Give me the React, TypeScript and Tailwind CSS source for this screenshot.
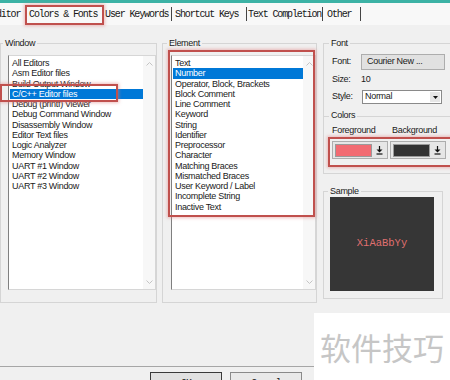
import React from "react";
import { clsx } from "clsx";

const WINDOWS = [
  "All Editors",
  "Asm Editor files",
  "Build Output Window",
  "C/C++ Editor files",
  "Debug (printf) Viewer",
  "Debug Command Window",
  "Disassembly Window",
  "Editor Text files",
  "Logic Analyzer",
  "Memory Window",
  "UART #1 Window",
  "UART #2 Window",
  "UART #3 Window",
];

const ELEMENTS = [
  "Text",
  "Number",
  "Operator, Block, Brackets",
  "Block Comment",
  "Line Comment",
  "Keyword",
  "String",
  "Identifier",
  "Preprocessor",
  "Character",
  "Matching Braces",
  "Mismatched Braces",
  "User Keyword / Label",
  "Incomplete String",
  "Inactive Text",
];

const mono = "font-['Liberation_Mono','Courier_New',monospace] text-[10px] tracking-[-1.12px] text-[#161616]";

function Chevron({ up }: { up?: boolean }) {
  return (
    <svg width="7" height="4" viewBox="0 0 7 4" className="text-[#c4c4c4]">
      <polyline
        points={up ? "0.5,3.5 3.5,0.5 6.5,3.5" : "0.5,0.5 3.5,3.5 6.5,0.5"}
        fill="none"
        stroke="currentColor"
        strokeWidth="1"
      />
    </svg>
  );
}

function ListBox({ items, selected, className }: { items: string[]; selected: number; className: string }) {
  return (
    <div className={clsx("flex h-[235px] border border-[#d6d6d6] border-l-[#7f7f7f] bg-white", className)}>
      <div className="flex-1 pt-[2px] pl-px">
        {items.map((item, i) => (
          <div
            key={item}
            className={clsx(
              "h-[10.25px] whitespace-nowrap pl-[2px] leading-[10.25px]",
              i === selected && "bg-[#0078d7] text-white"
            )}
          >
            {item}
          </div>
        ))}
      </div>
      {/* scrollbar */}
      <div className="flex w-[12px] flex-col items-center justify-between bg-[#f7f7f7] pt-[6px] pb-[5px]">
        <Chevron up />
        <Chevron />
      </div>
    </div>
  );
}

function DropIcon() {
  return (
    <svg width="7" height="9" viewBox="0 0 7 9">
      <line x1="3.5" y1="0" x2="3.5" y2="4" stroke="#111" strokeWidth="1.2" />
      <polygon points="0.5,3.5 6.5,3.5 3.5,6.5" fill="#111" />
      <line x1="0.5" y1="8" x2="6.5" y2="8" stroke="#111" strokeWidth="1.2" />
    </svg>
  );
}

function ColorPick({ color, className }: { color: string; className: string }) {
  return (
    <div className={clsx("flex h-[18px] items-center border border-[#adadad] bg-[#e6e6e6] pl-[2px]", className)}>
      <div className="h-[13px] w-[37px] border border-[#9a9a9a]" style={{ background: color }} />
      <div className="flex flex-1 justify-center">
        <DropIcon />
      </div>
    </div>
  );
}

function RedBox({ className }: { className: string }) {
  return (
    <div
      className={clsx(
        "pointer-events-none absolute border-2 border-[#c0504d] shadow-[0_0_3px_1px_rgba(225,130,130,0.5)]",
        className
      )}
    />
  );
}

export default function App() {
  return (
    <div className="relative h-[380px] w-[450px] overflow-hidden bg-[#f0f0f0] font-['Liberation_Sans',Arial,sans-serif] text-[9px] tracking-[-0.3px] text-[#1a1a1a]">
      <div className="h-[3px] bg-[#3cb2a5]" />

      {/* tab strip */}
      <div className={clsx("flex h-[22px] items-center bg-[#f8f8f8] whitespace-nowrap", mono)}>
        <span className="-ml-[9px] w-[34px]">Editor</span>
        <span className="w-[78px] pl-[4px]">Colors &amp; Fonts</span>
        <span className="w-[68px] pl-[2px]">User Keywords</span>
        <div className="h-[14px] w-px bg-[#444]" />
        <span className="w-[74px] pl-[3px]">Shortcut Keys</span>
        <div className="h-[14px] w-px bg-[#444]" />
        <span className="w-[75px] pl-[1px]">Text Completion</span>
        <div className="h-[14px] w-px bg-[#444]" />
        <span className="w-[37px] pl-[4px]">Other</span>
        <div className="h-[14px] w-px bg-[#444]" />
      </div>

      <div className="mt-[13px] flex items-start">
        {/* Window */}
        <fieldset className="h-[265px] w-[160px] border border-[#d5d5d5] p-0">
          <legend className="ml-[2px] px-[2px] leading-[10px]">Window</legend>
          <ListBox items={WINDOWS} selected={3} className="mt-[7px] ml-[7px] w-[148px]" />
        </fieldset>

        {/* Element */}
        <fieldset className="ml-[5px] h-[265px] w-[157px] border border-[#d5d5d5] p-0">
          <legend className="ml-[4px] px-[2px] leading-[10px]">Element</legend>
          <ListBox items={ELEMENTS} selected={1} className="mt-[7px] ml-[8px] w-[145px]" />
        </fieldset>

        {/* Font / Colors / Sample */}
        <div className="ml-[6px] flex flex-col">
          <fieldset className="h-[136px] w-[130px] border border-[#d5d5d5] p-0">
            <legend className="ml-[5px] px-[2px] leading-[10px]">Font</legend>
            <div className="pt-[6px] pl-[8px]">
              <div className="flex h-[16px] items-center">
                <span className="w-[29px]">Font:</span>
                <div className="flex h-[16px] w-[84px] items-center border border-[#adadad] bg-[#e1e1e1] pl-[5px]">
                  Courier New ...
                </div>
              </div>
              <div className="mt-[4px] flex h-[12px] items-center">
                <span className="w-[29px]">Size:</span>
                <span>10</span>
              </div>
              <div className="mt-[4px] flex h-[14px] items-center">
                <span className="w-[30px]">Style:</span>
                <div className="flex h-[14px] w-[80px] items-center border border-[#8a8a8a] bg-white pl-[2px]">
                  <span className="flex-1">Normal</span>
                  <div className="mr-px flex h-[10px] w-[10px] items-center justify-center bg-[#e6e6e6]">
                    <svg width="5" height="3" viewBox="0 0 5 3">
                      <polygon points="0,0 5,0 2.5,3" fill="#111" />
                    </svg>
                  </div>
                </div>
              </div>
              <div className="mt-[7px] -ml-[8px] flex h-[10px] items-center">
                <div className="h-px w-[5px] bg-[#d5d5d5]" />
                <span className="px-[2px]">Colors</span>
                <div className="h-px flex-1 bg-[#d5d5d5]" />
              </div>
              <div className="mt-[5px] flex h-[10px] items-center">
                <span className="w-[60px]">Foreground</span>
                <span>Background</span>
              </div>
              <div className="mt-[5px] flex">
                <ColorPick color="#f26b72" className="w-[56px]" />
                <ColorPick color="#333333" className="ml-[2px] w-[56px]" />
              </div>
            </div>
          </fieldset>

          <fieldset className="mt-[12px] h-[113px] w-[120px] border border-[#d5d5d5] p-0">
            <legend className="ml-[4px] px-[2px] leading-[10px]">Sample</legend>
            <div className="pt-px pl-[6px]">
              <div className="flex h-[94px] w-[104px] items-center justify-center bg-[#363636] font-['Liberation_Mono','Courier_New',monospace] text-[10.5px] tracking-[0px] text-[#e07070]">
                XiAaBbYy
              </div>
            </div>
          </fieldset>
        </div>
      </div>

      <div className="mt-[63px] h-px bg-[#a6a6a6]" />
      <div className={clsx("mt-[5px] flex", mono)}>
        <div className="ml-[150px] h-[22px] w-[72px] border border-[#3a3a3a] bg-[#e1e1e1] pt-[3px] text-center">OK</div>
        <div className="ml-[8px] h-[22px] w-[72px] border border-[#8a8a8a] bg-[#e9e9e9] pt-[3px] text-center">Cancel</div>
      </div>

      {/* annotation boxes */}
      <RedBox className="top-[5px] left-[25px] h-[20px] w-[79px]" />
      <RedBox className="top-[84px] left-0 h-[18px] w-[118px]" />
      <RedBox className="top-[50px] left-[168px] h-[167px] w-[147px]" />
      <RedBox className="top-[137px] left-[328px] h-[30px] w-[126px]" />

      {/* watermark */}
      <div className="absolute top-[313px] left-[314px] h-[67px] w-[136px] bg-white pt-[18px] pl-[6px] font-['Noto_Sans_CJK_SC',sans-serif] text-[31px] leading-[31px] tracking-[0px] text-[#c6c6c6]">
        软件技巧
      </div>
    </div>
  );
}
